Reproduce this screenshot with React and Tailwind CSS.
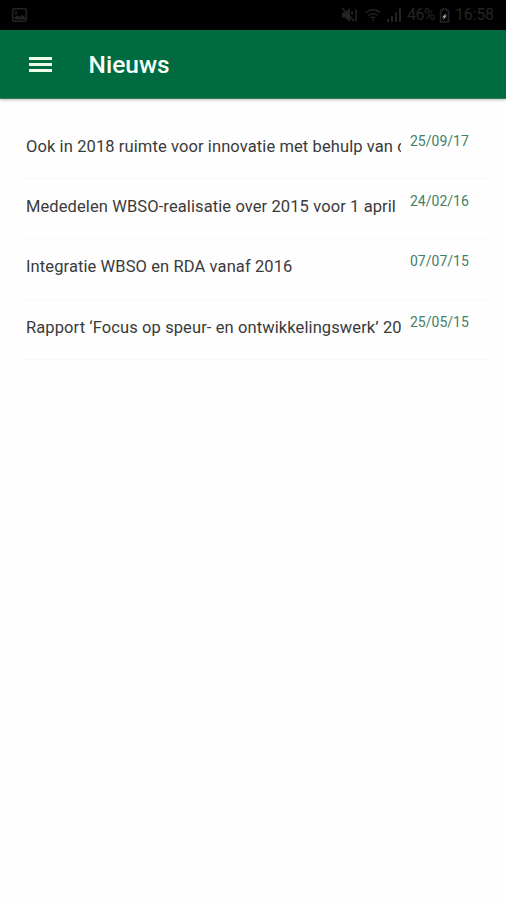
import React from 'react';

const newsItems = [
  { id: 1, title: 'Ook in 2018 ruimte voor innovatie met behulp van de', date: '25/09/17' },
  { id: 2, title: 'Mededelen WBSO-realisatie over 2015 voor 1 april', date: '24/02/16' },
  { id: 3, title: 'Integratie WBSO en RDA vanaf 2016', date: '07/07/15' },
  { id: 4, title: 'Rapport ‘Focus op speur- en ontwikkelingswerk’ 20', date: '25/05/15' },
];

const StatusBar = () => (
  <div className="flex h-[30px] items-center justify-between bg-black px-3 text-[#242424]">
    <svg width="15" height="14" viewBox="0 0 15 14" fill="none" stroke="currentColor" strokeWidth="1.5">
      <rect x="0.75" y="0.75" width="13.5" height="12.5" rx="1" />
      <path d="M2.5 11.500V9.500l3-2 2.500 1.500 2-2 3 2v2.500z" fill="currentColor" stroke="none" />
      <path d="M4 3v4" />
    </svg>
    <div className="flex items-center">
      {/* muted speaker */}
      <svg className="mr-[8px]" width="16" height="16" viewBox="0 0 16 16" fill="none" stroke="currentColor" strokeWidth="1.6">
        <path d="M1 5.500h3l5-4.500v14l-5-4.500H1z" fill="currentColor" stroke="none" />
        <path d="M1 1l12 13M11 4v4M15 2v12" />
      </svg>
      {/* wifi */}
      <svg className="mr-[6px]" width="16" height="14" viewBox="0 0 16 14" fill="none" stroke="currentColor" strokeWidth="1.5">
        <path d="M1 4.500c4-3.600 10-3.600 14 0M3.500 7.500c2.600-2.200 6.400-2.200 9 0M5.800 10.200c1.300-1 3.100-1 4.400 0" />
        <circle cx="8" cy="12.300" r="1" fill="currentColor" stroke="none" />
      </svg>
      {/* signal */}
      <svg className="mr-[5px]" width="15" height="14" viewBox="0 0 15 14" fill="currentColor">
        <path d="M0 11h2v3H0zM4 8h2v6H4zM8 4.500h2V14H8zM12 0h2v14h-2z" />
      </svg>
      <span className="w-[32px] whitespace-nowrap text-[16px] leading-none tracking-[-0.6px]">46%</span>
      {/* battery */}
      <svg className="mr-[5px]" width="11" height="15" viewBox="0 0 11 15">
        <path d="M3.500 1h4v1.500h2V14h-8V2.500h2z" fill="none" stroke="currentColor" strokeWidth="1.500" />
        <path d="M7 5L3 9.500h2L4.200 12l3.800-4.500H6z" fill="#a3a3a3" />
      </svg>
      <span className="w-[39px] whitespace-nowrap text-[16px] leading-none tracking-[-0.2px]">16:58</span>
    </div>
  </div>
);

const Header = () => (
  <header className="flex h-[69px] items-center border-b border-[#2f7d4c] bg-[#006b41] pl-[28.500px] shadow-[0_1px_3px_rgba(0,0,0,0.25)]">
    <button className="flex w-[23px] flex-col gap-[3px]" aria-label="Menu">
      <span className="h-[3px] w-full bg-[#eefbe8]" />
      <span className="h-[3px] w-full bg-[#eefbe8]" />
      <span className="h-[3px] w-full bg-[#eefbe8]" />
    </button>
    <h1 className="ml-[37px] pt-[2px] text-[24.500px] font-medium leading-8 text-[#f7fff9]">Nieuws</h1>
  </header>
);

const NewsRow = ({ title, date }) => (
  <li className="flex h-[60.200px] items-start border-b border-[#f7f7f7] pl-[6px]">
    <p className="w-[375px] overflow-hidden whitespace-nowrap pt-[16px] text-[16.500px] leading-6 tracking-[0.1px] text-[#3a3a3a]">{title}</p>
    <span className="ml-[9px] pt-[14px] text-[14px] leading-4 text-[#457f64]">{date}</span>
  </li>
);

const App = () => {
  return (
    <div className="min-h-screen bg-[#fefefe] font-[Roboto,sans-serif]">
      <StatusBar />
      <Header />
      <ul className="ml-[20px] mr-[18px] pt-[20px]">
        {newsItems.map(item => (
          <NewsRow key={item.id} title={item.title} date={item.date} />
        ))}
      </ul>
    </div>
  );
};

export default App;
